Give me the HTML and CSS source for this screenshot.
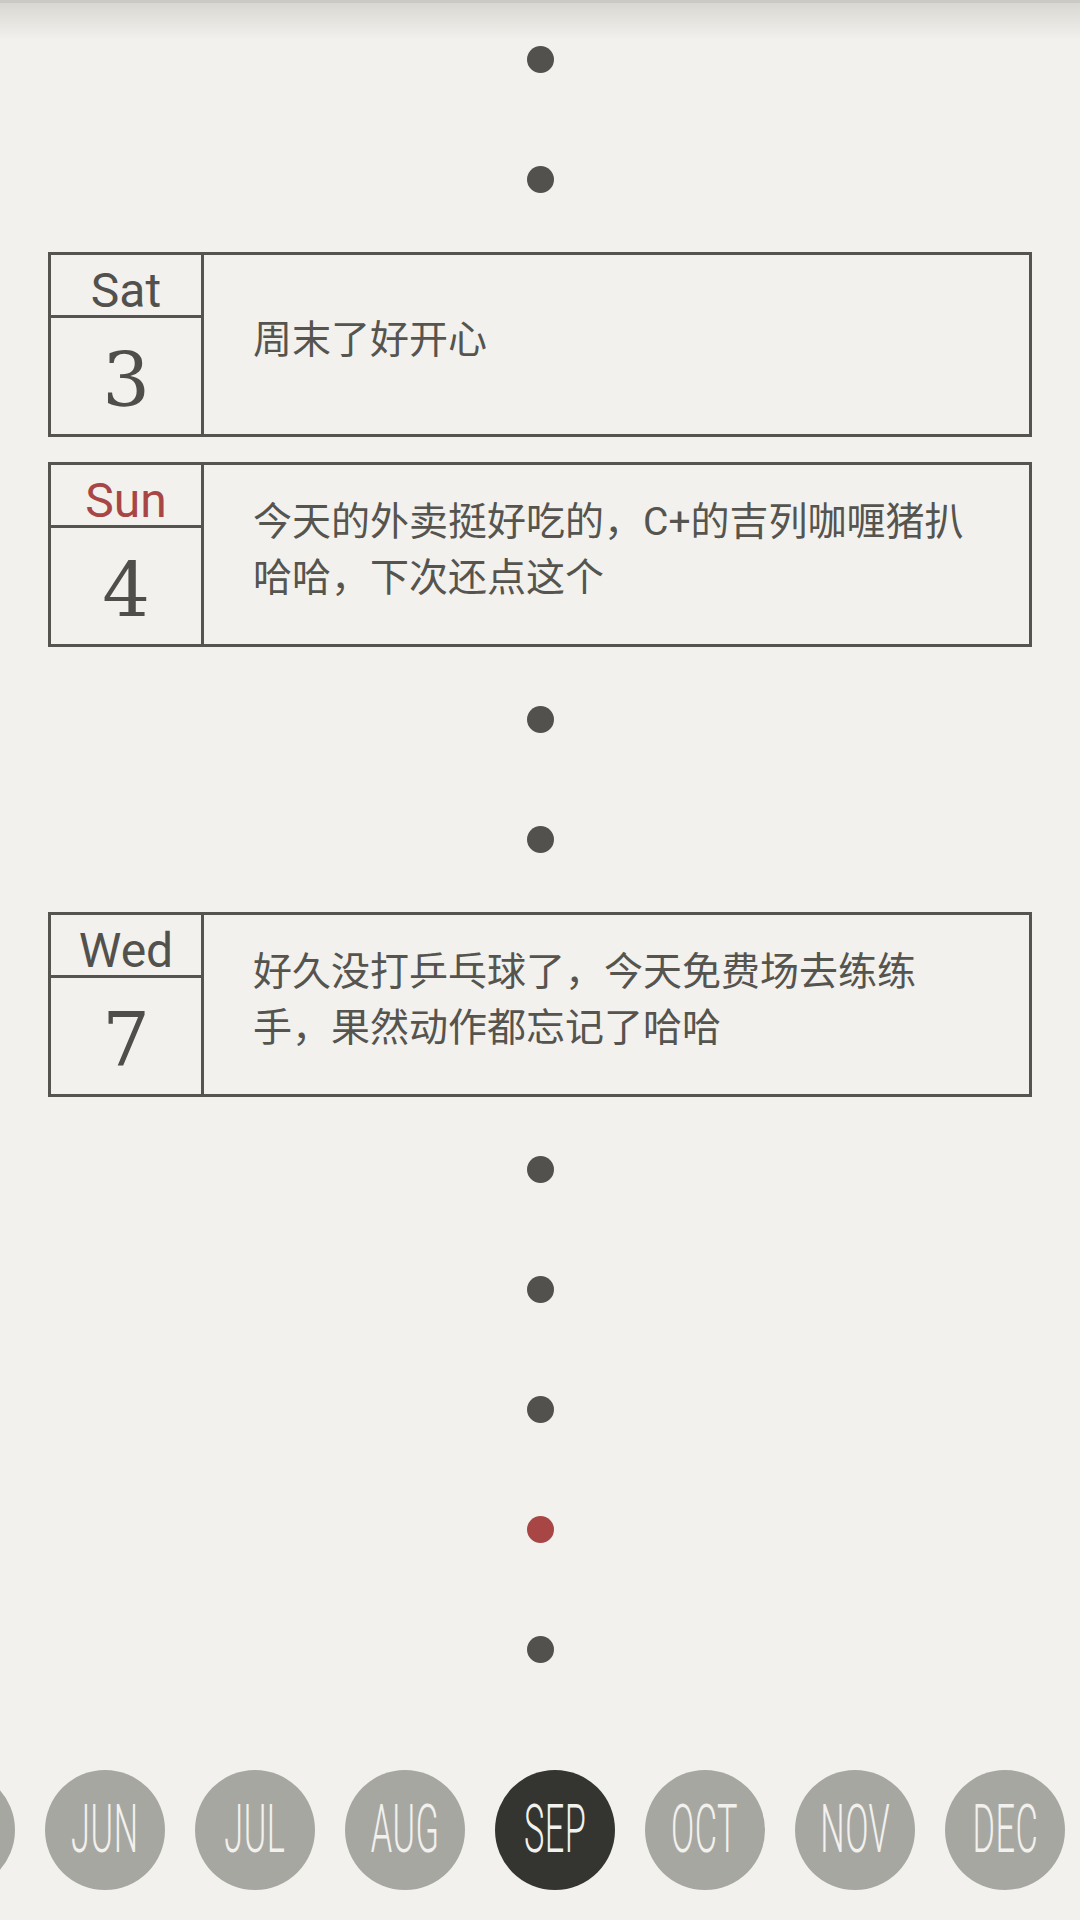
FILE: index.html
```html
<!DOCTYPE html>
<html lang="zh-CN">
<head>
<meta charset="utf-8">
<title>Diary</title>
<link rel="stylesheet" href="styles.css">
</head>
<body>
<div class="app">
  <div class="timeline">
    <div class="dot-row"><span class="dot"></span></div>
    <div class="dot-row"><span class="dot"></span></div>
    <div class="card-row">
      <div class="card">
        <div class="date">
          <div class="weekday">Sat</div>
          <div class="day">3</div>
        </div>
        <div class="note"><p>周末了好开心</p></div>
      </div>
    </div>
    <div class="card-row">
      <div class="card">
        <div class="date">
          <div class="weekday sunday">Sun</div>
          <div class="day">4</div>
        </div>
        <div class="note"><p>今天的外卖挺好吃的，C+的吉列咖喱猪扒哈哈，下次还点这个</p></div>
      </div>
    </div>
    <div class="dot-row"><span class="dot"></span></div>
    <div class="dot-row"><span class="dot"></span></div>
    <div class="card-row">
      <div class="card">
        <div class="date">
          <div class="weekday">Wed</div>
          <div class="day">7</div>
        </div>
        <div class="note"><p>好久没打乒乓球了，今天免费场去练练手，果然动作都忘记了哈哈</p></div>
      </div>
    </div>
    <div class="dot-row"><span class="dot"></span></div>
    <div class="dot-row"><span class="dot"></span></div>
    <div class="dot-row"><span class="dot"></span></div>
    <div class="dot-row"><span class="dot today"></span></div>
    <div class="dot-row"><span class="dot"></span></div>
  </div>
  <nav class="months">
    <div class="month" aria-label="MAY"></div>
    <div class="month"><span>JUN</span></div>
    <div class="month"><span>JUL</span></div>
    <div class="month"><span>AUG</span></div>
    <div class="month active"><span>SEP</span></div>
    <div class="month"><span>OCT</span></div>
    <div class="month"><span>NOV</span></div>
    <div class="month"><span>DEC</span></div>
  </nav>
  <div class="top-shadow"></div>
</div>
</body>
</html>
```

FILE: styles.css
```css
html, body {
  margin: 0;
  padding: 0;
  width: 1080px;
  height: 1920px;
  overflow: hidden;
  background: #f2f1ed;
}

.app {
  position: relative;
  width: 1080px;
  height: 1920px;
  display: flex;
  flex-direction: column;
  color: #52514d;
  font-family: Roboto, "Noto Sans CJK SC", sans-serif;
}

.timeline {
  flex: 1;
  overflow: hidden;
  display: flex;
  flex-direction: column;
  margin-top: -1px;
}

.dot-row {
  flex: none;
  height: 120px;
  display: flex;
  align-items: center;
  justify-content: center;
}

.dot {
  width: 27px;
  height: 27px;
  border-radius: 50%;
  background: #52514d;
}

.dot.today {
  background: #a84646;
}

.card-row {
  flex: none;
  padding: 13px 48px 12px;
}

.card {
  box-sizing: border-box;
  height: 185px;
  border: 3px solid #55544f;
  display: flex;
}

.date {
  flex: none;
  width: 150px;
  border-right: 3px solid #55544f;
  display: flex;
  flex-direction: column;
}

.weekday {
  box-sizing: border-box;
  height: 63px;
  border-bottom: 3px solid #55544f;
  padding-top: 11px;
  line-height: 49px;
  font-size: 48px;
  text-align: center;
  color: #52514d;
}

.weekday.sunday {
  color: #a84646;
}

.day {
  flex: 1;
  box-sizing: border-box;
  padding-top: 8px;
  line-height: 108px;
  font-family: "DejaVu Serif", "Liberation Serif", serif;
  font-size: 75px;
  text-align: center;
  color: #4f4e4a;
}

.note {
  flex: 1;
  display: flex;
  align-items: center;
  padding: 0 50px 10px 49px;
}

.note p {
  margin: 0;
  font-size: 39px;
  line-height: 56px;
  color: #55544f;
  line-break: strict;
}

.months {
  flex: none;
  height: 180px;
  display: flex;
  align-items: center;
  gap: 30px;
  margin-left: -105px;
  overflow: hidden;
}

.month {
  flex: none;
  width: 120px;
  height: 120px;
  border-radius: 50%;
  background: #a7a7a2;
  display: flex;
  align-items: center;
  justify-content: center;
  overflow: hidden;
}

.month.active {
  background: #343431;
}

.month span {
  display: block;
  font-family: Roboto, sans-serif;
  font-weight: 300;
  font-size: 66px;
  line-height: 66px;
  color: #f2f1ed;
  transform: scaleX(0.52);
  letter-spacing: 1px;
}

.top-shadow {
  position: absolute;
  top: 0;
  left: 0;
  right: 0;
  height: 40px;
  background: linear-gradient(to bottom, #cac9c4 0, #cac9c4 3px, #d8d7d2 3px, rgba(242, 241, 237, 0) 40px);
  pointer-events: none;
}
```
